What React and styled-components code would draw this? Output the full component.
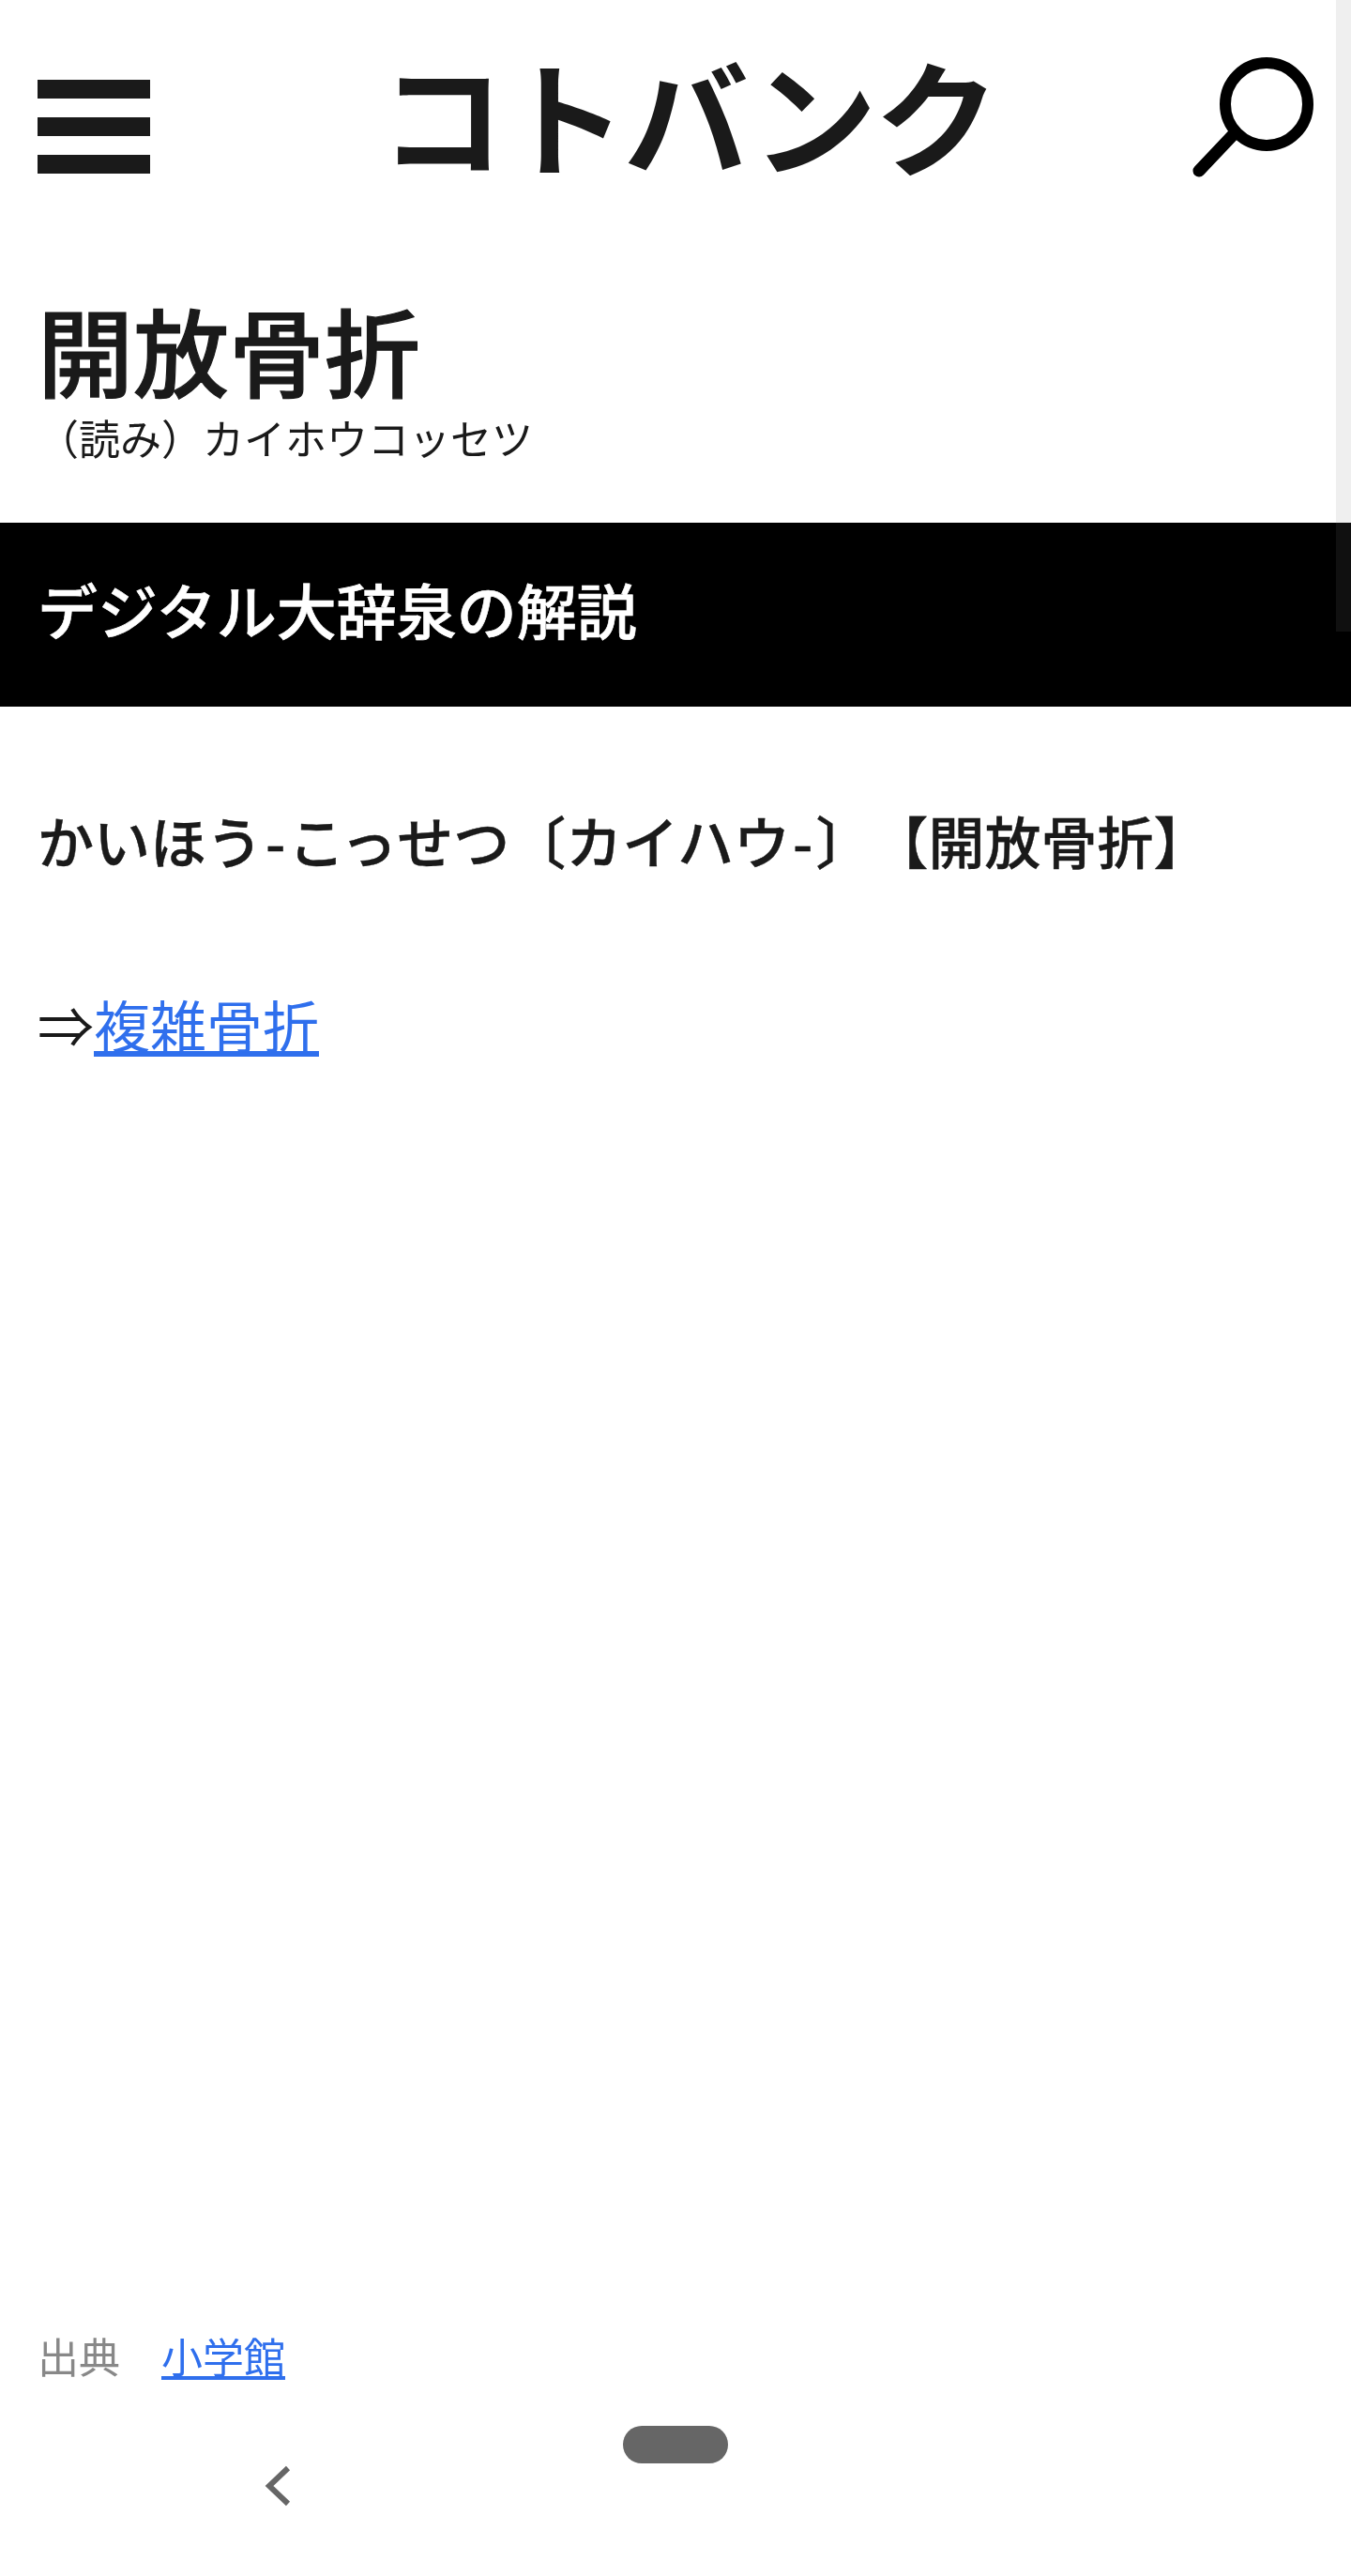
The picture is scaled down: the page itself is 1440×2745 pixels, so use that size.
import React from "react";
import styled, { createGlobalStyle } from "styled-components";

const Global = createGlobalStyle`
  html, body { margin: 0; padding: 0; background: #fff; }
  body { font-family: "Noto Sans CJK JP", "Noto Sans", sans-serif; color: #1a1a1a; text-spacing-trim: space-all; }
`;

const Page = styled.div`
  position: relative;
  width: 1440px;
  height: 2745px;
  overflow: hidden;
  display: flex;
  flex-direction: column;
`;

const Header = styled.header`
  display: flex;
  align-items: flex-start;
  height: 300px;
  padding: 60px 40px 0;
  box-sizing: border-box;
`;

const Menu = styled.div`
  flex: none;
  display: flex;
  flex-direction: column;
  gap: 20px;
  width: 120px;
  margin-top: 25px;
`;

const MenuBar = styled.span`
  display: block;
  height: 20px;
  background: #1a1a1a;
`;

const Logo = styled.div`
  flex: none;
  width: 640px;
  margin-left: 245px;
  margin-top: -4px;
  font-size: 133px;
  font-weight: 700;
  line-height: 128px;
  letter-spacing: -3px;
  color: #1a1a1a;
  white-space: nowrap;
`;

const SearchIcon = styled.svg`
  flex: none;
  width: 130px;
  height: 132px;
  margin-left: 225px;
`;

const TitleBlock = styled.div`
  height: 257px;
  padding: 0 40px;
  box-sizing: border-box;
`;

const Title = styled.h1`
  margin: 13px 0 0;
  font-size: 102px;
  line-height: 118px;
  font-weight: 500;
  -webkit-text-stroke: 1.2px #1a1a1a;
`;

const Reading = styled.div`
  font-size: 44px;
  line-height: 52px;
  margin-top: 9px;
`;

const Band = styled.h2`
  margin: 0;
  height: 196px;
  padding: 0 40px 14px;
  display: flex;
  align-items: center;
  background: #000;
  color: #fff;
  font-size: 64px;
  font-weight: 500;
  -webkit-text-stroke: 0.6px #fff;
  box-sizing: border-box;
`;

const Headword = styled.h3`
  margin: 102px 0 0;
  padding: 0 40px;
  font-size: 60px;
  line-height: 80px;
  font-weight: 500;
  -webkit-text-stroke: 0.4px #1a1a1a;
  white-space: nowrap;
`;

const Hyphen = styled.span`
  margin: 0 3px;
`;

const Body = styled.p`
  margin: 116px 0 0;
  padding: 0 40px;
  font-size: 60px;
  line-height: 80px;
`;

const Link = styled.a`
  color: #2f6fed;
  text-decoration: underline;
`;

const Source = styled.div`
  margin-top: auto;
  padding: 0 40px 205px;
  font-size: 44px;
  line-height: 60px;
  color: #888;
`;

const Scrollbar = styled.div`
  position: absolute;
  top: 0;
  right: 0;
  width: 16px;
  height: 673px;
  background: #101010;
  mix-blend-mode: difference;
`;

const Pill = styled.div`
  position: absolute;
  left: 664px;
  top: 2585px;
  width: 112px;
  height: 40px;
  border-radius: 20px;
  background: #666;
`;

const Back = styled.svg`
  position: absolute;
  left: 280px;
  top: 2625px;
  width: 32px;
  height: 48px;
`;

export default function App() {
  return (
    <Page>
      <Global />
      <Header>
        <Menu>
          <MenuBar />
          <MenuBar />
          <MenuBar />
        </Menu>
        <Logo>コトバンク</Logo>
        <SearchIcon viewBox="0 0 130 132">
          <circle cx="80" cy="51" r="44" fill="none" stroke="#000" strokeWidth="12" />
          <line x1="44" y1="84" x2="8" y2="122" stroke="#000" strokeWidth="13" strokeLinecap="round" />
        </SearchIcon>
      </Header>
      <TitleBlock>
        <Title>開放骨折</Title>
        <Reading>（読み）カイホウコッセツ</Reading>
      </TitleBlock>
      <Band>デジタル大辞泉の解説</Band>
      <Headword>かいほう<Hyphen>-</Hyphen>こっせつ〔カイハウ<Hyphen>-</Hyphen>〕【開放骨折】</Headword>
      <Body>⇒<Link href="#">複雑骨折</Link></Body>
      <Source>出典　<Link href="#">小学館</Link></Source>
      <Scrollbar />
      <Pill />
      <Back viewBox="0 0 32 48">
        <polyline points="27,5 7,24 27,43" fill="none" stroke="#666" strokeWidth="6" />
      </Back>
    </Page>
  );
}
